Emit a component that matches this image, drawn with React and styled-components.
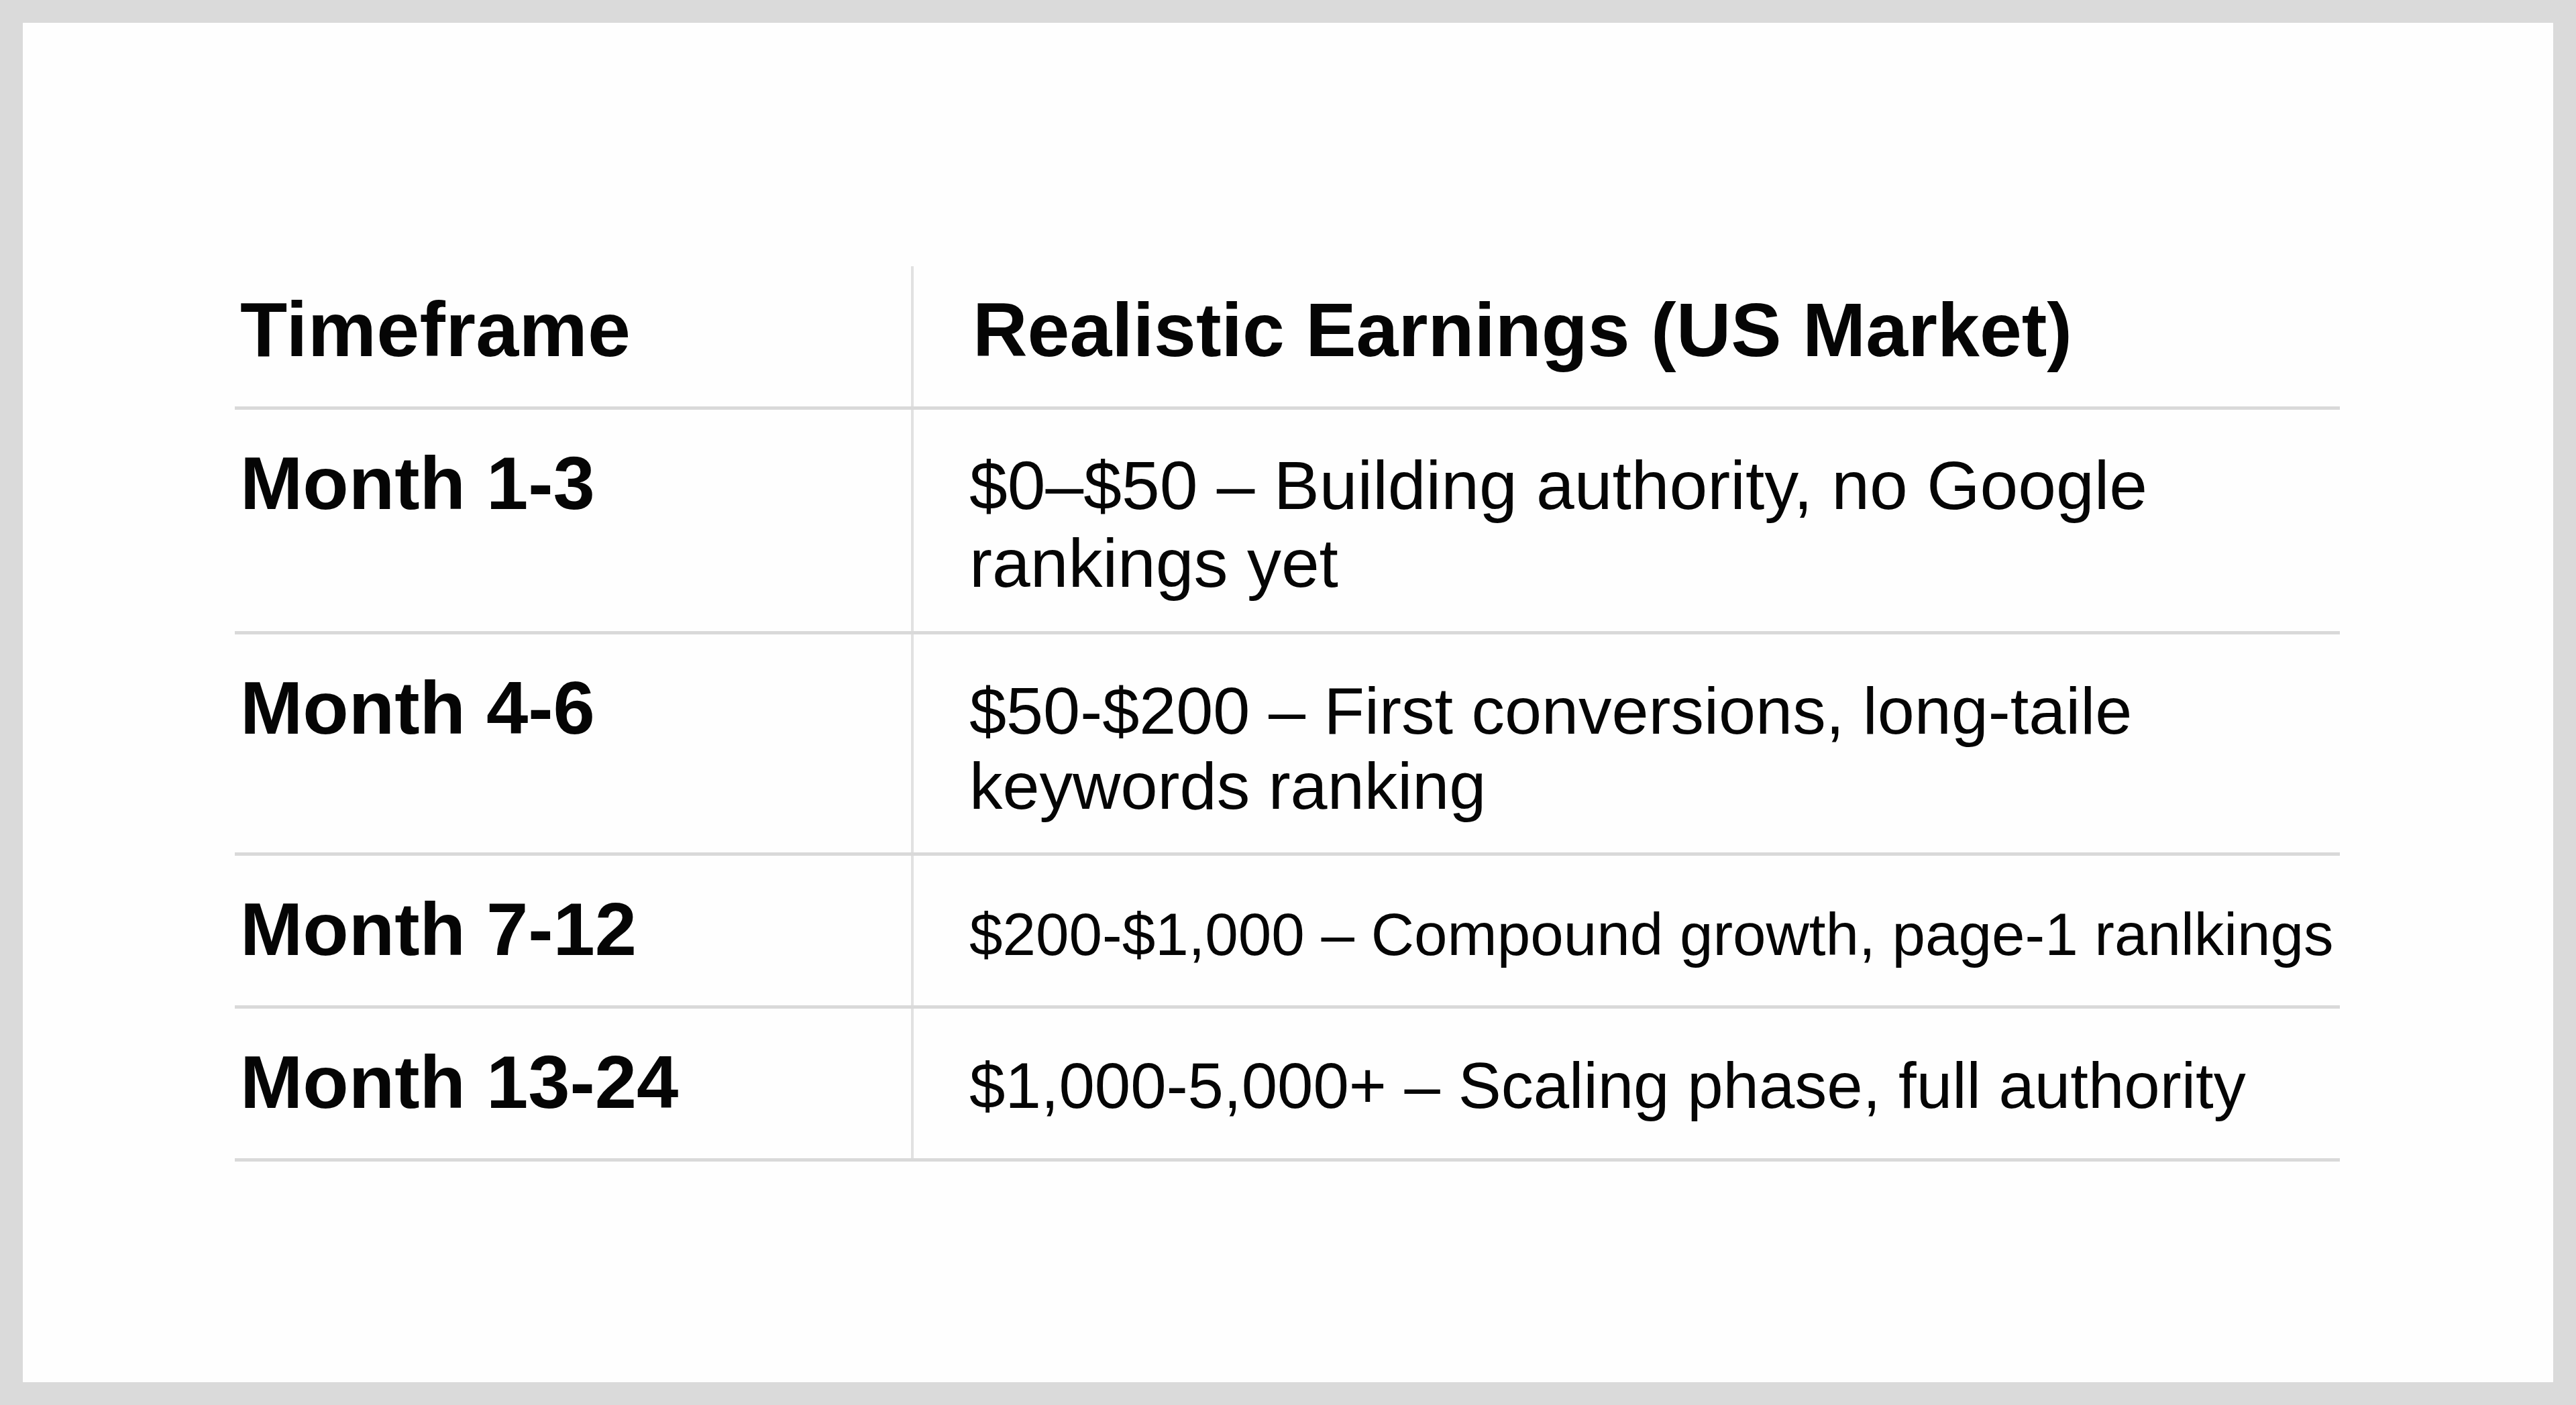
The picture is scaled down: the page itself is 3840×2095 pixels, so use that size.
import React from "react";
import styled, { createGlobalStyle } from "styled-components";

const GlobalStyle = createGlobalStyle`
  html, body {
    margin: 0;
    padding: 0;
    background: #dadada;
  }
  * {
    box-sizing: border-box;
  }
`;

const Page = styled.div`
  padding: 34px;
  height: 2095px;
`;

const Card = styled.div`
  background: #fefefe;
  height: 100%;
  padding: 363px 318px 0 316px;
  font-family: "Liberation Sans", Arial, Helvetica, sans-serif;
  color: #050505;
`;

const Table = styled.div`
  display: grid;
`;

const Row = styled.div`
  display: grid;
  grid-template-columns: 1010px 1fr;
  align-items: baseline;
  padding: ${(p) => (p.head ? "30px 0 49px" : "45px 0 42px")};
  min-height: ${(p) => (p.head ? 0 : 228)}px;
  border-bottom: 5px solid #d9d9d9;
  background-image: linear-gradient(#e1e1e1, #e1e1e1);
  background-size: 4px 100%;
  background-position: 1008px 0;
  background-repeat: no-repeat;
`;

const Label = styled.div`
  padding-left: 8px;
  font-size: 112px;
  line-height: 129px;
  font-weight: 700;
`;

const HeadCell = styled(Label)`
  padding-left: ${(p) => (p.right ? 90 : 8)}px;
  font-size: ${(p) => (p.right ? 113 : 115)}px;
  letter-spacing: ${(p) => (p.right ? 0 : 0.3)}px;
`;

const Value = styled.div`
  padding-left: 85px;
  font-size: ${(p) => p.size || 100}px;
  line-height: 1.14;
  font-weight: 400;
`;

const rows = [
  { label: "Month 1-3", text: "$0–$50 – Building authority, no Google rankings yet", size: 102 },
  { label: "Month 4-6", text: "$50-$200 – First conversions, long-taile keywords ranking", size: 99 },
  { label: "Month 7-12", text: "$200-$1,000 – Compound growth, page-1 ranlkings", size: 89 },
  { label: "Month 13-24", text: "$1,000-5,000+ – Scaling phase, full authority", size: 96 },
];

export default function App() {
  return (
    <>
      <GlobalStyle />
      <Page>
        <Card>
          <Table>
            <Row head>
              <HeadCell>Timeframe</HeadCell>
              <HeadCell right>Realistic Earnings (US Market)</HeadCell>
            </Row>
            {rows.map((r) => (
              <Row key={r.label}>
                <Label>{r.label}</Label>
                <Value size={r.size}>{r.text}</Value>
              </Row>
            ))}
          </Table>
        </Card>
      </Page>
    </>
  );
}
